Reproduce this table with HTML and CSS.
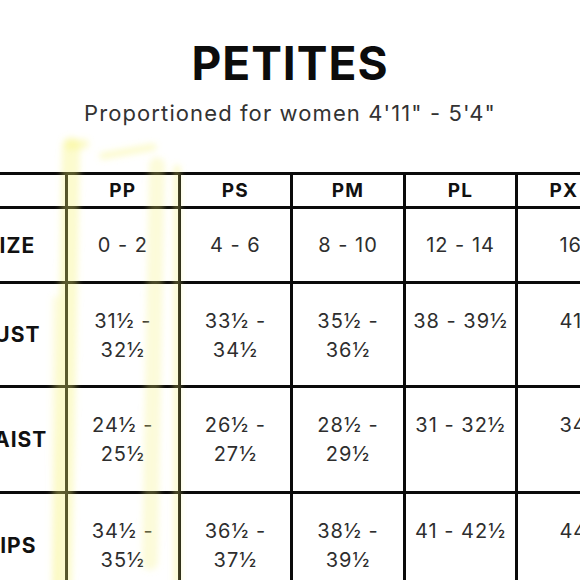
FILE: index.html
```html
<!DOCTYPE html>
<html>
<head>
<meta charset="utf-8">
<link rel="stylesheet" href="styles.css">
</head>
<body>
<div class="page">
  <h1 class="title">PETITES</h1>
  <p class="subtitle">Proportioned for women 4'11" - 5'4"</p>
  <table class="chart">
    <colgroup>
      <col class="c-label"><col class="c"><col class="c"><col class="c"><col class="c"><col class="c">
    </colgroup>
    <tr class="head">
      <th class="label"></th><th>PP</th><th>PS</th><th>PM</th><th>PL</th><th class="last">PX</th>
    </tr>
    <tr class="r-size">
      <th class="label">SIZE</th><td>0 - 2</td><td>4 - 6</td><td>8 - 10</td><td>12 - 14</td><td class="last">16 - 18</td>
    </tr>
    <tr class="r-bust">
      <th class="label">BUST</th><td>31½ -<br>32½</td><td>33½ -<br>34½</td><td>35½ -<br>36½</td><td class="tight">38 - 39½</td><td class="last">41 - 42½</td>
    </tr>
    <tr class="r-tall">
      <th class="label">WAIST</th><td>24½ -<br>25½</td><td>26½ -<br>27½</td><td>28½ -<br>29½</td><td class="tight">31 - 32½</td><td class="last">34 - 35½</td>
    </tr>
    <tr class="r-tall">
      <th class="label">HIPS</th><td>34½ -<br>35½</td><td>36½ -<br>37½</td><td>38½ -<br>39½</td><td class="tight">41 - 42½</td><td class="last">44 - 45½</td>
    </tr>
  </table>
  <svg class="marker" width="580" height="580" viewBox="0 0 580 580">
    <defs>
      <filter id="soft" x="-50%" y="-5%" width="200%" height="110%">
        <feGaussianBlur stdDeviation="3"/>
      </filter>
    </defs>
    <g filter="url(#soft)" fill="none" stroke-linecap="round">
      <path d="M71 146 L63 585" stroke="rgba(246,242,110,0.34)" stroke-width="18"/>
      <path d="M56 300 L55 585" stroke="rgba(246,242,110,0.2)" stroke-width="8"/>
      <path d="M70 145 L84 144" stroke="rgba(246,242,110,0.34)" stroke-width="10"/>
      <path d="M157 165 L150 562" stroke="rgba(246,242,120,0.28)" stroke-width="16"/>
      <path d="M177 168 L177 585" stroke="rgba(246,242,110,0.4)" stroke-width="6"/>
      <path d="M103 156 L153 147" stroke="rgba(246,242,110,0.34)" stroke-width="7"/>
    </g>
  </svg>
</div>
</body>
</html>
```
FILE: styles.css
```css
html, body {
  margin: 0;
  padding: 0;
  background: #ffffff;
}
body {
  width: 580px;
  height: 580px;
  overflow: hidden;
  font-family: Inter, "Open Sans", "DejaVu Sans", sans-serif;
  color: #2b2b2b;
}
.page {
  position: relative;
  width: 580px;
  height: 580px;
}
.title {
  margin: 0;
  padding-top: 40px;
  text-align: center;
  font-size: 46px;
  line-height: 46px;
  font-weight: 700;
  letter-spacing: 1px;
  color: #0c0c0c;
}
.subtitle {
  margin: 0;
  padding-top: 14px;
  text-align: center;
  font-size: 22px;
  line-height: 26px;
  font-weight: 400;
  letter-spacing: 1.1px;
  color: #333;
}
.chart {
  margin-top: 46px;
  margin-left: -48px;
  border-collapse: collapse;
  table-layout: fixed;
  width: 676px;
}
.c-label { width: 113px; }
.c { width: 112.6px; }
.chart th, .chart td {
  border: 3px solid #0a0a0a;
  padding: 0;
  text-align: center;
}
.head th {
  height: 31px;
  font-size: 19px;
  font-weight: 700;
  letter-spacing: 1.2px;
  color: #111;
  vertical-align: middle;
}
.chart th.label {
  font-size: 21px;
  font-weight: 700;
  letter-spacing: 1px;
  color: #111;
  vertical-align: middle;
}
.chart td {
  vertical-align: top;
  font-size: 20px;
  line-height: 29px;
  letter-spacing: 1px;
  color: #2e2e2e;
  white-space: nowrap;
}
.r-size td { padding-top: 22px; height: 50px; }
.r-bust td { padding-top: 23px; height: 78px; }
.r-tall td { padding-top: 23px; height: 80px; }
.chart .last { text-align: left; padding-left: 41px; }
.head th.last { padding-left: 31px; }
.marker {
  position: absolute;
  left: 0;
  top: 0;
  pointer-events: none;
}
```
